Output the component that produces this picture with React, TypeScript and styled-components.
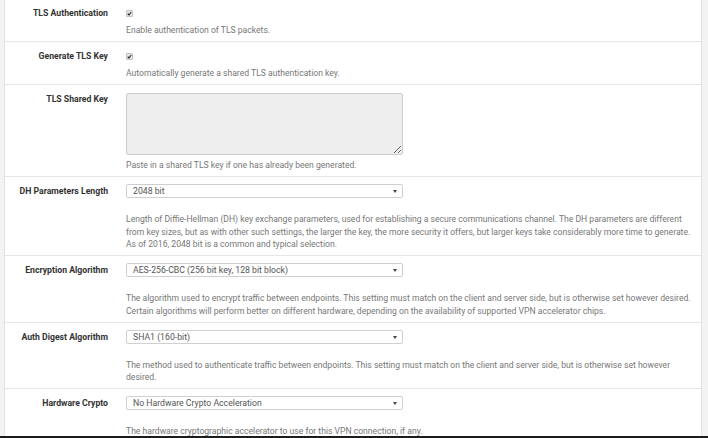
import React from 'react';
import styled, { createGlobalStyle } from 'styled-components';

const GlobalStyle = createGlobalStyle`
  html, body {
    margin: 0;
    padding: 0;
    height: 438px;
    overflow: hidden;
    background: #f3f3f3;
    font-family: Roboto, "Liberation Sans", Arial, sans-serif;
  }
`;

const Page = styled.div`
  display: flex;
  flex-direction: column;
  width: 708px;
  height: 438px;
`;

const Main = styled.div`
  flex: 1;
  display: flex;
  overflow: hidden;
  padding-left: 4px;
`;

const Panel = styled.section`
  width: 696px;
  background: #fff;
  border-left: 1px solid #e2e2e2;
  border-right: 1px solid #e2e2e2;
  margin-top: -1px;
  overflow: hidden;
`;

const BottomBar = styled.div`
  height: 2px;
  background: #1c1c1c;
`;

const Row = styled.div`
  display: grid;
  grid-template-columns: 103px 574px;
  column-gap: 18px;
  padding: 0 0 ${(p) => p.$pb ?? 5}px;
  border-bottom: 1px solid #e6e6e6;
`;

const Label = styled.div`
  padding-top: 7px;
  line-height: 14px;
  font-size: 8.7px;
  font-weight: 700;
  color: #333;
  text-align: right;
`;

const Content = styled.div`
  display: flex;
  flex-direction: column;
  align-items: flex-start;
  padding-top: 7px;
`;

const CheckLine = styled.div`
  height: 14px;
  display: flex;
  align-items: center;
`;

const CheckBox = styled.span`
  width: 7px;
  height: 7px;
  border: 1px solid #c4c4c4;
  border-radius: 1px;
  background: #e4e4e4;
  box-sizing: border-box;
  display: flex;
  align-items: center;
  justify-content: center;
`;

const KeyArea = styled.textarea`
  width: 277px;
  height: 62px;
  margin: 1px 0 0;
  box-sizing: border-box;
  background: #eeeeee;
  border: 1px solid #cccccc;
  border-radius: 2px;
  resize: both;
  outline: none;
  font-family: inherit;
`;

const SelectBox = styled.div`
  position: relative;
  width: 277px;
  height: 14px;
  box-sizing: border-box;
  border: 1px solid #cfcfcf;
  border-radius: 2px;
  background: #fff;
  padding-left: 6px;
  font-size: 8.7px;
  line-height: 12px;
  color: #555;
`;

const Caret = styled.span`
  position: absolute;
  right: 5px;
  top: 5px;
  width: 0;
  height: 0;
  border-left: 2px solid transparent;
  border-right: 2px solid transparent;
  border-top: 3px solid #444;
`;

const Help = styled.p`
  margin: ${(p) => p.$mt ?? 3.5}px 0 0;
  font-size: 8.6px;
  line-height: 12.5px;
  color: #777;
`;

const HelpLine = styled.span`
  display: block;
`;

const Check = () => (
  <CheckBox>
    <svg width="5" height="5" viewBox="0 0 10 10">
      <path d="M1.5 5.5 L4 8 L8.5 2" fill="none" stroke="#222" strokeWidth="2.2" />
    </svg>
  </CheckBox>
);

const Select: React.FC<{ value: string }> = ({ value }) => (
  <SelectBox>
    {value}
    <Caret />
  </SelectBox>
);

const selectRows = [
  {
    label: 'DH Parameters Length',
    value: '2048 bit',
    help: [
      'Length of Diffie-Hellman (DH) key exchange parameters, used for establishing a secure communications channel. The DH parameters are different',
      'from key sizes, but as with other such settings, the larger the key, the more security it offers, but larger keys take considerably more time to generate.',
      'As of 2016, 2048 bit is a common and typical selection.',
    ],
  },
  {
    label: 'Encryption Algorithm',
    value: 'AES-256-CBC (256 bit key, 128 bit block)',
    help: [
      'The algorithm used to encrypt traffic between endpoints. This setting must match on the client and server side, but is otherwise set however desired.',
      'Certain algorithms will perform better on different hardware, depending on the availability of supported VPN accelerator chips.',
    ],
  },
  {
    label: 'Auth Digest Algorithm',
    value: 'SHA1 (160-bit)',
    help: [
      'The method used to authenticate traffic between endpoints. This setting must match on the client and server side, but is otherwise set however',
      'desired.',
    ],
  },
  {
    label: 'Hardware Crypto',
    value: 'No Hardware Crypto Acceleration',
    help: ['The hardware cryptographic accelerator to use for this VPN connection, if any.'],
  },
];

const App: React.FC = () => (
  <>
    <GlobalStyle />
    <Page>
      <Main>
        <Panel>
          <Row>
            <Label>TLS Authentication</Label>
            <Content>
              <CheckLine>
                <Check />
              </CheckLine>
              <Help>Enable authentication of TLS packets.</Help>
            </Content>
          </Row>
          <Row>
            <Label>Generate TLS Key</Label>
            <Content>
              <CheckLine>
                <Check />
              </CheckLine>
              <Help>Automatically generate a shared TLS authentication key.</Help>
            </Content>
          </Row>
          <Row $pb={4.5}>
            <Label>TLS Shared Key</Label>
            <Content>
              <KeyArea readOnly />
              <Help $mt={4}>Paste in a shared TLS key if one has already been generated.</Help>
            </Content>
          </Row>
          {selectRows.map((row) => (
            <Row key={row.label} $pb={4.5}>
              <Label>{row.label}</Label>
              <Content>
                <Select value={row.value} />
                <Help $mt={15}>
                  {row.help.map((line) => (
                    <HelpLine key={line}>{line}</HelpLine>
                  ))}
                </Help>
              </Content>
            </Row>
          ))}
        </Panel>
      </Main>
      <BottomBar />
    </Page>
  </>
);

export default App;
